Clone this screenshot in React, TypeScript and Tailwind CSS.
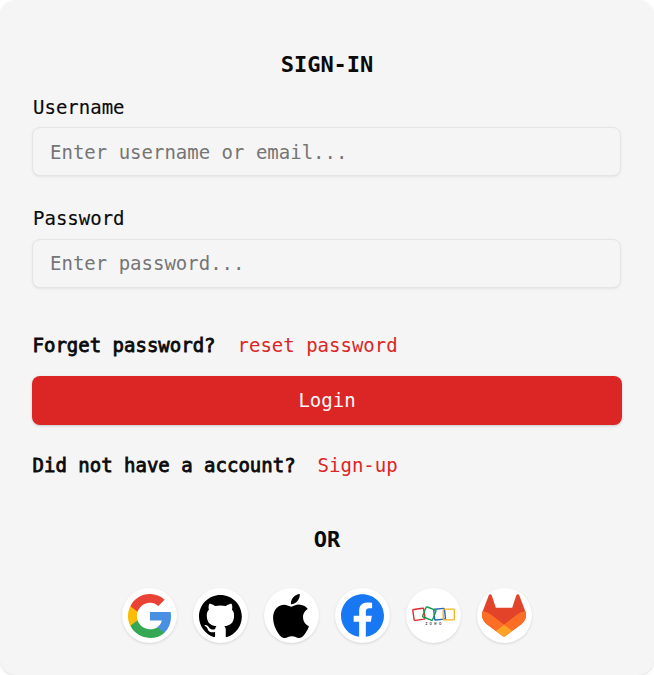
import type { ReactNode } from "react";
import { SiApple } from "react-icons/si";

function GoogleLogo() {
  return (
    <svg viewBox="0 0 533.5 544.3" className="h-11 w-[43px]">
      <path fill="#4a90e2" d="M533.5 278.4c0-18.5-1.5-37.1-4.7-55.3H272.1v104.8h147c-6.1 33.8-25.7 63.7-54.4 82.7v68h87.7c51.5-47.4 81.1-117.4 81.1-200.2z" />
      <path fill="#34a853" d="M272.1 544.3c73.4 0 135.3-24.1 180.4-65.7l-87.7-68c-24.4 16.6-55.9 26-92.6 26-71 0-131.2-47.9-152.8-112.3H28.9v70.1c46.2 91.9 140.3 149.9 243.2 149.9z" />
      <path fill="#fbbc05" d="M119.3 324.3c-11.4-33.8-11.4-70.4 0-104.2V150H28.9c-38.6 76.9-38.6 167.5 0 244.4l90.4-70.1z" />
      <path fill="#ea4335" d="M272.1 107.7c38.8-.6 76.3 14 104.4 40.8l77.7-77.7C405 24.6 339.7-.8 272.1 0 169.2 0 75.1 58 28.9 150l90.4 70.1c21.5-64.5 81.8-112.4 152.8-112.4z" />
    </svg>
  );
}

function GithubLogo() {
  return (
    <svg viewBox="0 0 98 96" className="h-11 w-[43px]">
      <path d="M48.854 0C21.839 0 0 22 0 49.217c0 21.756 13.993 40.172 33.405 46.69 2.427.49 3.316-1.059 3.316-2.362 0-1.141-.08-5.052-.08-9.127-13.59 2.934-16.42-5.867-16.42-5.867-2.184-5.704-5.42-7.17-5.42-7.17-4.448-3.015.324-3.015.324-3.015 4.934.326 7.523 5.052 7.523 5.052 4.367 7.496 11.404 5.378 14.235 4.074.404-3.178 1.699-5.378 3.074-6.6-10.839-1.141-22.243-5.378-22.243-24.283 0-5.378 1.94-9.778 5.014-13.2-.485-1.222-2.184-6.275.486-13.038 0 0 4.125-1.304 13.426 5.052a46.97 46.97 0 0 1 12.214-1.63c4.125 0 8.33.571 12.213 1.63 9.302-6.356 13.427-5.052 13.427-5.052 2.67 6.763.97 11.816.485 13.038 3.155 3.422 5.015 7.822 5.015 13.2 0 18.905-11.404 23.06-22.324 24.283 1.78 1.548 3.316 4.481 3.316 9.126 0 6.6-.08 11.897-.08 13.526 0 1.304.89 2.853 3.316 2.364 19.412-6.52 33.405-24.935 33.405-46.691C97.707 22 75.788 0 48.854 0z" />
    </svg>
  );
}

function FacebookLogo() {
  return (
    <svg viewBox="0 0 24 24" className="h-[43px] w-[43px]" fill="#1877f2">
      <path d="M24 12.073c0-6.627-5.373-12-12-12s-12 5.373-12 12c0 5.99 4.388 10.954 10.125 11.854v-8.385H7.078v-3.47h3.047V9.43c0-3.007 1.792-4.669 4.533-4.669 1.312 0 2.686.235 2.686.235v2.953H15.83c-1.491 0-1.956.925-1.956 1.874v2.25h3.328l-.532 3.47h-2.796v8.385C19.612 23.027 24 18.062 24 12.073z" />
    </svg>
  );
}

function ZohoLogo() {
  return (
    <svg viewBox="0 0 44 44" className="h-11 w-11" fill="none" strokeWidth="1.4">
      <rect x="2.4" y="14.8" width="11" height="11" rx="1" stroke="#e0282f" transform="rotate(-8 7.9 20.3)" />
      <rect x="23.2" y="14.8" width="10.8" height="10.8" rx="1" stroke="#2267b3" transform="rotate(-6 28.6 20.2)" />
      <rect x="13" y="14.2" width="10.6" height="10.8" rx="1" stroke="#149a49" transform="rotate(22 18.3 19.6)" />
      <rect x="32.2" y="15.1" width="11.2" height="10.8" rx="1" stroke="#f9b21d" />
      <text x="14.4" y="31" fill="#222" fontSize="3" fontWeight="700" letterSpacing="2.4" fontFamily="Liberation Sans, sans-serif">ZOHO</text>
    </svg>
  );
}

function GitlabLogo() {
  return (
    <svg viewBox="94 97 192 186" className="h-[43px] w-11">
      <path fill="#e24329" d="M282.83,170.73l-.27-.69-26.14-68.22a6.81,6.81,0,0,0-2.69-3.24,7,7,0,0,0-8,.43,7,7,0,0,0-2.32,3.52l-17.65,54H154.29l-17.65-54A6.86,6.86,0,0,0,134.32,99a7,7,0,0,0-8-.43,6.87,6.87,0,0,0-2.69,3.24L97.44,170l-.26.69a48.54,48.54,0,0,0,16.1,56.1l.09.07.24.17,39.82,29.82,19.7,14.91,12,9.06a8.07,8.07,0,0,0,9.76,0l12-9.06,19.7-14.91,40.06-30,.1-.08A48.56,48.56,0,0,0,282.83,170.73Z" />
      <path fill="#fc6d26" d="M282.83,170.73l-.27-.69a88.3,88.3,0,0,0-35.15,15.8L190,229.25c19.55,14.79,36.57,27.64,36.57,27.64l40.06-30,.1-.08A48.56,48.56,0,0,0,282.83,170.73Z" />
      <path fill="#fca326" d="M153.43,256.89l19.7,14.91,12,9.06a8.07,8.07,0,0,0,9.76,0l12-9.06,19.7-14.91S209.55,244,190,229.25C170.45,244,153.43,256.89,153.43,256.89Z" />
      <path fill="#fc6d26" d="M132.58,185.84A88.19,88.19,0,0,0,97.44,170l-.26.69a48.54,48.54,0,0,0,16.1,56.1l.09.07.24.17,39.82,29.82s17-12.85,36.57-27.64Z" />
    </svg>
  );
}

function SocialButton({ label, children }: { label: string; children: ReactNode }) {
  return (
    <button type="button" aria-label={label} className="flex size-[55px] items-center justify-center rounded-full bg-white pr-px shadow-[0_1px_3px_rgba(0,0,0,0.1),0_1px_2px_-1px_rgba(0,0,0,0.1)]">
      {children}
    </button>
  );
}

function Field({ id, label, type, placeholder }: { id: string; label: string; type: string; placeholder: string }) {
  return (
    <div className="flex flex-col">
      <label htmlFor={id} className="h-[25px] pl-px leading-[25px] [-webkit-text-stroke:0.15px_#0a0a0a]">{label}</label>
      <input
        id={id}
        type={type}
        placeholder={placeholder}
        className={`w-[589px] rounded-lg border border-[#e5e5e5] bg-neutral-100 px-[17px] shadow-[0_1px_3px_rgba(0,0,0,0.06),0_1px_2px_-1px_rgba(0,0,0,0.06)] placeholder:text-[#757575] ${type === "password" ? "mt-2 h-[49px] pb-[2px]" : "mt-[7px] h-[49px]"}`}
      />
    </div>
  );
}

export default function App() {
  return (
    <div className="bg-white">
      <main className="flex h-[675px] flex-col rounded-2xl bg-neutral-100 px-8 pt-[50px] font-['DejaVu_Sans_Mono',monospace] text-[19px] text-neutral-950 shadow-sm">
        <h1 className="h-[30px] text-center text-[22px] leading-[30px] font-bold">SIGN-IN</h1>
        <form className="mt-[15px] flex flex-col">
          <div className="flex flex-col gap-[30px]">
            <Field id="username" label="Username" type="text" placeholder="Enter username or email..." />
            <Field id="password" label="Password" type="password" placeholder="Enter password..." />
          </div>
          <p className="mt-11 flex h-[26px] items-center gap-[22px] pl-[0.5px]">
            <span className="[-webkit-text-stroke:0.8px_#0a0a0a]">Forget password?</span>
            <a href="#" className="text-[#dc2626]">reset password</a>
          </p>
          <button type="button" className="mt-[18px] h-[49px] rounded-lg bg-[#dc2626] text-neutral-50 shadow-[0_1px_3px_rgba(0,0,0,0.15),0_1px_2px_-1px_rgba(0,0,0,0.1)]">Login</button>
        </form>
        <p className="mt-[27px] flex h-[26px] items-center gap-[22px] pl-[0.5px]">
          <span className="[-webkit-text-stroke:0.8px_#0a0a0a]">Did not have a account?</span>
          <a href="#" className="text-[#dc2626]">Sign-up</a>
        </p>
        <h2 className="mt-[47px] h-[30px] text-center text-[22px] leading-[30px] font-bold">OR</h2>
        <div className="mt-[33px] flex justify-center gap-4">
          <SocialButton label="Google"><GoogleLogo /></SocialButton>
          <SocialButton label="GitHub"><GithubLogo /></SocialButton>
          <SocialButton label="Apple"><SiApple className="size-11 text-black" /></SocialButton>
          <SocialButton label="Facebook"><FacebookLogo /></SocialButton>
          <SocialButton label="Zoho"><ZohoLogo /></SocialButton>
          <SocialButton label="GitLab"><GitlabLogo /></SocialButton>
        </div>
      </main>
    </div>
  );
}
